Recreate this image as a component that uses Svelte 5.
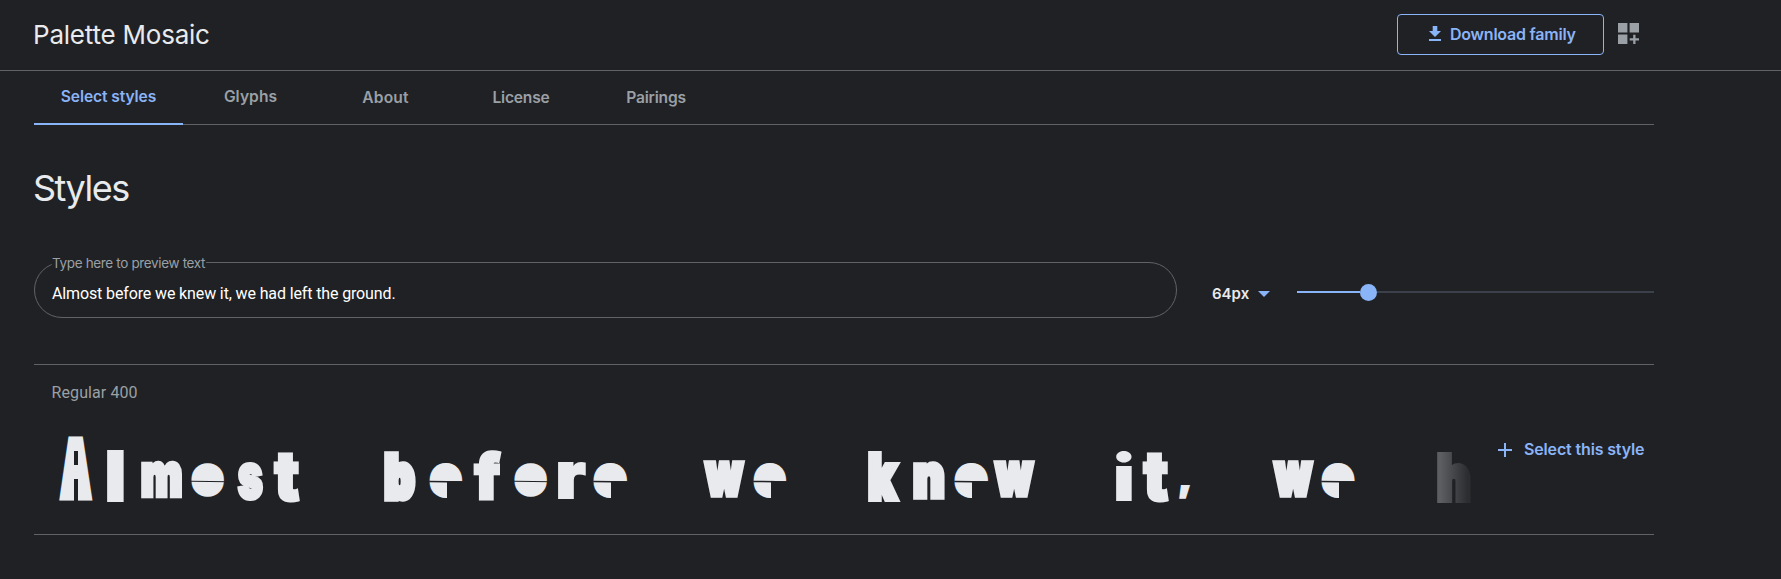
<script>
  const tabs = [
    { name: 'Select styles', width: 149, fit: -0.1, drop: 0 },
    { name: 'Glyphs', width: 135, fit: 0.05, drop: 0 },
    { name: 'About', width: 135, fit: 0.15, drop: 1 },
    { name: 'License', width: 136, fit: -0.2, drop: 1 },
    { name: 'Pairings', width: 134, fit: -0.2, drop: 1 }
  ];

  // Specimen proportions: character, left, right, top, bottom, outline weight, cut style
  const words = [
    [['A', 60.5, 90, 436, 501, 26, 'arch'], ['l', 106.5, 123.5, 451, 503, 0], ['m', 140.5, 182, 462, 499, 5], ['o', 191, 224.5, 464, 498, 14, 'slit'], ['s', 237, 263, 462, 501, 4], ['t', 273, 300, 452, 503, 3]],
    [['b', 384, 416, 451, 502, 8], ['e', 429, 462, 463, 499, 14, 'notch'], ['f', 472.5, 501, 451, 501, 3], ['o', 514, 547.5, 464, 498, 14, 'slit'], ['r', 558, 586, 462, 499, 2], ['e', 593, 627, 463, 499, 14, 'notch']],
    [['w', 703, 745, 460, 498, 6], ['e', 753, 786, 463, 499, 14, 'notch']],
    [['k', 867.5, 899, 451, 502, 6], ['n', 913, 945, 462, 500, 6], ['e', 954, 988, 463, 499, 14, 'notch'], ['w', 993, 1035, 460, 498, 6]],
    [['i', 1115.5, 1131.5, 451, 501, 0], ['t', 1142, 1169, 452, 503, 3], [',', 1179, 1190, 485, 499, 4]],
    [['w', 1272, 1314, 460, 498, 6], ['e', 1321, 1354.5, 463, 499, 14, 'notch']],
    [['h', 1437, 1471, 452, 503, 6]]
  ];

  const ctx = document.createElement('canvas').getContext('2d');
  ctx.font = '900 64px Inter';
  const LINE = 80;
  const TOP = 430;

  function fit([char, left, right, top, bottom, stroke, cut], next) {
    const m = ctx.measureText(char);
    const half = stroke / 2;
    const inkL = -m.actualBoundingBoxLeft - half;
    const inkR = m.actualBoundingBoxRight + half;
    const base = (LINE - m.fontBoundingBoxAscent - m.fontBoundingBoxDescent) / 2 + m.fontBoundingBoxAscent;
    const inkT = base - m.actualBoundingBoxAscent - half;
    const inkB = base + m.actualBoundingBoxDescent + half;
    const sx = (right - left) / (inkR - inkL);
    const sy = (bottom - top) / (inkB - inkT);
    return {
      char, stroke, cut,
      advance: next - left,
      width: right - left,
      transform: `matrix(${sx},0,0,${sy},${-inkL * sx},${top - TOP - inkT * sy})`
    };
  }

  const specimen = words.map((word, w) =>
    word.map((g, i) => fit(g, word[i + 1]?.[1] ?? words[w + 1]?.[0][1] ?? 1475))
  );
</script>

<div class="page">
  <header>
    <h1>Palette Mosaic</h1>
    <div class="actions">
      <button class="download">
        <svg width="12" height="15" viewBox="0 0 12 15"><path d="M3.7 0h4.6v5H12l-6 6-6-6h3.7zM0 13h12v2H0z" fill="currentColor" /></svg>
        <span>Download family</span>
      </button>
      <svg class="grid-icon" width="21" height="21" viewBox="0 0 21 21"><path d="M0 0h9.4v9.4H0zM11.6 0H21v9.4h-9.4zM0 11.6h9.4V21H0zM15.2 11.8h2.3v3.4H21v2.3h-3.5V21h-2.3v-3.5h-3.5v-2.3h3.5z" fill="currentColor" /></svg>
    </div>
  </header>

  <main>
    <nav>
      {#each tabs as tab, i}
        <a class:active={i === 0} class:lower={tab.drop} style:width="{tab.width}px"><span style:letter-spacing="{tab.fit}px">{tab.name}</span></a>
      {/each}
    </nav>

    <h2>Styles</h2>

    <div class="controls">
      <div class="field">
        <label for="preview">Type here to preview text</label>
        <div id="preview" class="value">Almost before we knew it, we had left the ground.</div>
      </div>
      <div class="size"><span>64px</span><i class="caret"></i></div>
      <div class="slider"><i class="fill"></i><i class="thumb"></i><i class="rest"></i></div>
    </div>

    <section>
      <div class="style-name">Regular 400</div>
      <div class="row">
        <div class="specimen">{#each specimen as word, w}{#if w}{' '}{/if}<span class="word" class:fade={w === specimen.length - 1}>{#each word as g}<span class="cell" style:width="{g.advance}px"><span class="glyph" style:transform={g.transform} style:-webkit-text-stroke-width="{g.stroke}px">{g.char}</span>{#if g.cut}<i class="cut {g.cut}" style:width="{g.width + 4}px"></i>{/if}</span>{/each}</span>{/each}</div>
        <button class="select">
          <svg width="14" height="14" viewBox="0 0 14 14"><path d="M6 0h2v6h6v2H8v6H6V8H0V6h6z" fill="currentColor" /></svg>
          <span>Select this style</span>
        </button>
      </div>
    </section>
  </main>
</div>

<style>
  :global(body) { background: #202124; }
  * { box-sizing: border-box; }
  .page { height: 579px; background: #202124; color: #e8eaed; font-family: Inter, sans-serif; }
  header { height: 71px; border-bottom: 1px solid #5f6368; padding: 0 142px 0 33px; display: flex; justify-content: space-between; }
  h1 { margin: 0; font-size: 26px; font-weight: 400; line-height: 70px; letter-spacing: -0.22px; white-space: nowrap; }
  .actions { display: flex; padding-top: 14px; gap: 14px; }
  button { background: none; border: 0; padding: 0; margin: 0; color: #8ab4f8; font: 600 16px/20px Inter, sans-serif; white-space: nowrap; display: flex; }
  .download { width: 207px; height: 41px; border: 1px solid #8ab4f8; border-radius: 4px; padding: 9px 0 0 31px; gap: 9px; letter-spacing: -0.22px; }
  .download svg { margin-top: 2px; }
  .grid-icon { color: #9aa0a6; margin-top: 9px; }
  main { margin-left: 34px; width: 1620px; }
  nav { height: 54px; display: flex; border-bottom: 1px solid #5f6368; }
  nav a { height: 54px; display: flex; justify-content: center; font-size: 15.6px; font-weight: 600; line-height: 20px; color: #9aa0a6; padding-top: 16px; white-space: nowrap; }
  nav a.lower { padding-top: 17px; }
  nav a.active { color: #8ab4f8; border-bottom: 2px solid #8ab4f8; }
  h2 { margin: 39px 0 0 -1px; font-size: 36px; font-weight: 400; line-height: 48px; letter-spacing: -1.5px; }
  .controls { display: flex; margin-top: 50px; height: 56px; }
  .field { width: 1143px; height: 56px; border: 1px solid #5f6368; border-radius: 28px; padding-left: 17px; }
  label { display: block; width: 154px; height: 16px; margin-top: -8px; background: #202124; color: #9aa0a6; font-size: 13.5px; line-height: 16px; letter-spacing: -0.35px; white-space: nowrap; }
  .value { font: 400 16px/20px Roboto, sans-serif; color: #fff; margin-top: 13px; letter-spacing: -0.13px; }
  .size { display: flex; align-items: center; margin-left: 35px; width: 85px; font-size: 15px; font-weight: 600; line-height: 20px; padding-top: 7px; gap: 9px; }
  .caret { border: 6px solid transparent; border-top: 6px solid #8ab4f8; border-bottom: 0; }
  .slider { width: 357px; display: flex; align-items: center; padding-top: 4px; }
  .fill { width: 63px; height: 2px; background: #8ab4f8; }
  .thumb { width: 17px; height: 17px; border-radius: 50%; background: #8ab4f8; }
  .rest { flex: 1; height: 2px; background: #3c404a; }
  section { margin-top: 46px; height: 171px; border: solid #5f6368; border-width: 1px 0; padding-top: 18px; }
  .style-name { padding-left: 17.5px; font: 400 16px/20px Roboto, sans-serif; color: #9aa0a6; letter-spacing: 0.1px; }
  .row { display: flex; margin-top: 27px; height: 80px; }
  .specimen { width: 1450px; padding-left: 26.5px; display: flex; white-space: nowrap; font: 900 64px/80px Inter, sans-serif; color: #e8eaed; }
  .word { display: flex; flex: none; }
  .fade .glyph { color: transparent; background: linear-gradient(90deg, #5d5e61 10%, #2c2d30 90%); -webkit-background-clip: text; background-clip: text; -webkit-text-stroke-color: transparent; }
  .cell { display: block; position: relative; flex: none; height: 80px; }
  .glyph { display: block; width: max-content; transform-origin: 0 0; -webkit-text-stroke-color: #e8eaed; stroke-linejoin: round; }
  .cut { position: absolute; left: 0; top: 50.5px; height: 36px; }
  .slit { height: 1px; background: #202124; transform: rotate(1deg); }
  .notch { height: 22px; background: linear-gradient(#202124, #202124) 0 0 / 100% 1.5px no-repeat, linear-gradient(90deg, transparent 18px, #202124 18px); transform: rotate(1deg); }
  .arch { top: 6px; height: 66px; background: linear-gradient(#202124, #202124) 13px 15px / 4px 14px no-repeat, linear-gradient(#202124, #202124) 13px 43px / 4px 23px no-repeat; }
  .select { margin-left: 14px; padding-top: 9px; gap: 12px; height: 40px; letter-spacing: -0.15px; }
  .select svg { margin-top: 4px; }
</style>
